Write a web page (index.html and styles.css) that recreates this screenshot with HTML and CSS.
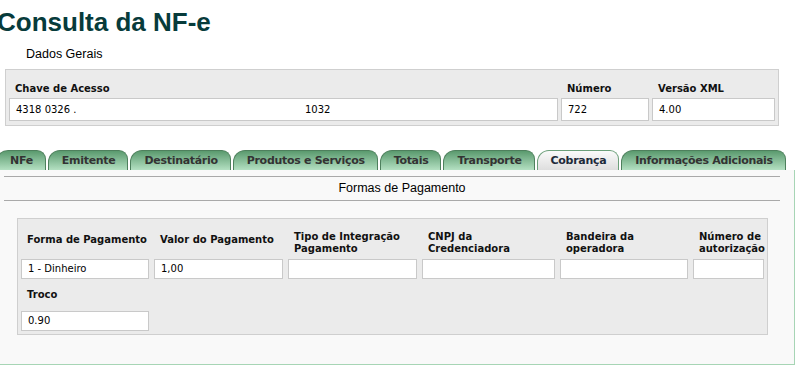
FILE: index.html
```html
<!DOCTYPE html>
<html lang="pt-BR">
<head>
  <meta charset="UTF-8">
  <title>Consulta da NF-e</title>
  <link rel="stylesheet" href="styles.css">
</head>
<body>
  <h1 class="page-title">Consulta da NF-e</h1>
  <div class="section-title">Dados Gerais</div>

  <div class="fieldset general">
    <label class="field-label">Chave de Acesso</label>
    <label class="field-label">Número</label>
    <label class="field-label">Versão XML</label>
    <div class="input"><span class="key-start">4318 0326 .</span>1032</div>
    <div class="input">722</div>
    <div class="input">4.00</div>
  </div>

  <ul class="tabs">
    <li class="tab">NFe</li>
    <li class="tab">Emitente</li>
    <li class="tab">Destinatário</li>
    <li class="tab">Produtos e Serviços</li>
    <li class="tab">Totais</li>
    <li class="tab">Transporte</li>
    <li class="tab active">Cobrança</li>
    <li class="tab">Informações Adicionais</li>
  </ul>

  <div class="tab-panel">
    <div class="panel-title">Formas de Pagamento</div>

    <div class="fieldset payment">
      <div class="payment-grid">
        <label class="field-label single">Forma de Pagamento</label>
        <label class="field-label single">Valor do Pagamento</label>
        <label class="field-label">Tipo de Integração Pagamento</label>
        <label class="field-label">CNPJ da Credenciadora</label>
        <label class="field-label">Bandeira da operadora</label>
        <label class="field-label">Número de autorização</label>
        <div class="input">1 - Dinheiro</div>
        <div class="input">1,00</div>
        <div class="input"></div>
        <div class="input"></div>
        <div class="input"></div>
        <div class="input"></div>
      </div>
      <div class="troco">
        <label class="field-label">Troco</label>
        <div class="input">0.90</div>
      </div>
    </div>
  </div>
</body>
</html>
```

FILE: styles.css
```css
body {
  margin: 0;
  background: #fff;
  color: #000;
  font-family: "DejaVu Sans", Verdana, sans-serif;
  font-size: 10px;
}

.page-title {
  margin: 0 0 0 -3px;
  padding-top: 7px;
  font: bold 26px/30px "Liberation Sans", Arial, sans-serif;
  color: #073b3b;
}

.section-title {
  margin-top: 10px;
  padding-left: 26px;
  font: 12.5px/14px "Liberation Sans", Arial, sans-serif;
}

/* caixas cinzas com os campos */
.fieldset {
  box-sizing: border-box;
  border: 1px solid #cfcfcf;
  background: #ebebeb;
}

.field-label {
  display: block;
  padding-left: 6px;
  font-weight: bold;
  font-size: 10px;
  line-height: 12px;
  color: #111;
}

.input {
  box-sizing: border-box;
  height: 20px;
  border: 1px solid #c9c9c9;
  background: #fff;
  padding: 0 6px;
  font-size: 10px;
  line-height: 18px;
  white-space: nowrap;
  overflow: hidden;
}

.general {
  margin: 8px 0 0 5px;
  width: 774px;
  padding: 13px 2px 4px 3px;
  display: grid;
  grid-template-columns: 549px 88px 123px;
  column-gap: 3px;
  row-gap: 3px;
}
.general .input {
  height: 23px;
  line-height: 21px;
}
.key-start {
  display: inline-block;
  width: 289px;
}

.tabs {
  display: flex;
  gap: 2px;
  margin: 24px 0 0 -4px;
  padding: 0;
  list-style: none;
}
.tab {
  box-sizing: border-box;
  height: 20px;
  padding: 0 12px 0 13px;
  border: 1px solid #4e805d;
  border-bottom: none;
  border-radius: 12px 9px 0 0;
  background: linear-gradient(#5a9a6e, #b4e0c2);
  font-weight: bold;
  font-size: 11px;
  line-height: 19px;
  letter-spacing: -0.3px;
  color: #333;
  white-space: nowrap;
}
.tab.active {
  border-color: #6c9f7a;
  background: linear-gradient(#fafafa, #dedede);
  color: #1e2a3a;
}

.tab-panel {
  box-sizing: border-box;
  width: 795px;
  background: #f9f9f9;
  border-right: 1px solid #a7d5b5;
  border-bottom: 1px solid #a7d5b5;
  padding: 6px 0 29px 0;
}

.panel-title {
  margin: 0 14px 0 4px;
  border-top: 1px solid #a9a9a9;
  border-bottom: 1px solid #a9a9a9;
  padding: 4px 0 5px 20px;
  text-align: center;
  font: 12.5px/14px "Liberation Sans", Arial, sans-serif;
}

.payment {
  margin: 17px 0 0 17px;
  width: 751px;
  padding: 12px 3px 3px 3px;
}
.payment-grid {
  display: grid;
  grid-template-columns: 128px 129px 129px 133px 128px 71px;
  column-gap: 5px;
  row-gap: 4px;
  align-items: center;
}
.payment-grid .field-label {
  height: 24px;
  display: flex;
  align-items: center;
}
.payment-grid .field-label.single {
  height: 18px;
  padding-bottom: 6px;
}

.troco {
  margin-top: 10px;
  width: 128px;
}
.troco .field-label {
  margin-bottom: 10px;
}
```
